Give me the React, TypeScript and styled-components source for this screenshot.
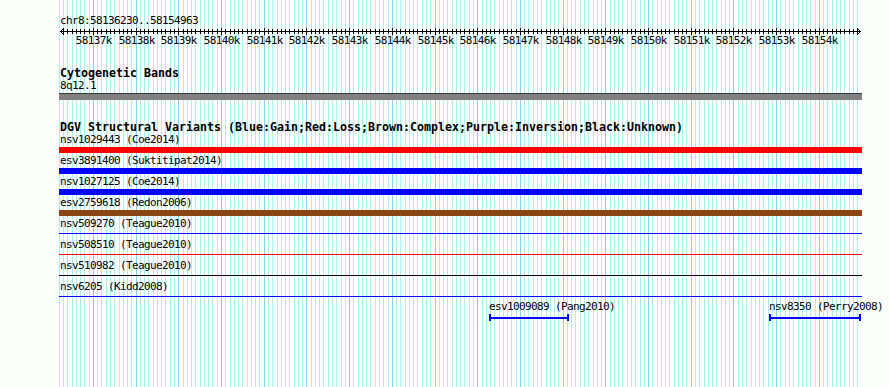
import React from "react";
import styled, { createGlobalStyle, css } from "styled-components";

const START = 58136230;
const END = 58154963;
const X0 = 60;
const SPAN_PX = 800;
const toX = (bp: number) => X0 + ((bp - START) * SPAN_PX) / (END - START);

const GlobalStyle = createGlobalStyle`
  html, body {
    margin: 0;
    padding: 0;
    background: #fcfffc;
  }
  body {
    font-family: "DejaVu Sans Mono", "Liberation Mono", monospace;
    color: #000;
  }
`;

/* GD "small" font look: 6px advance, 8px tall digits */
const smallFont = css`
  font-size: 11px;
  letter-spacing: -0.622px;
  line-height: 12px;
  height: 12px;
  white-space: nowrap;
`;

const Page = styled.div`
  position: relative;
  width: 890px;
  height: 387px;
  overflow: hidden;
  background: #fcfffc;
`;

const GridLayer = styled.svg`
  position: absolute;
  left: 0;
  top: 0;
  width: 890px;
  height: 387px;
  shape-rendering: crispEdges;
  pointer-events: none;
`;

const Content = styled.div`
  position: relative;
  display: flex;
  flex-direction: column;
  width: 890px;
`;

const RegionLabel = styled.div`
  ${smallFont};
  margin: 15px 0 0 60px;
`;

const RulerSvg = styled.svg`
  display: block;
  width: 890px;
  height: 20px;
  shape-rendering: crispEdges;
  font-family: "DejaVu Sans Mono", "Liberation Mono", monospace;
  font-size: 11px;
  letter-spacing: -0.622px;
`;

const TrackTitle = styled.div<{ $gap: number }>`
  margin: ${(p) => p.$gap}px 0 0 60px;
  font-size: 11.63px;
  font-weight: bold;
  line-height: 13px;
  height: 13px;
  white-space: nowrap;
`;

const BandLabel = styled.div`
  ${smallFont};
  margin-left: 60px;
`;

const BandBar = styled.div`
  margin: 1px 0 0 59px;
  width: 803px;
  height: 7px;
  box-sizing: border-box;
  background: #808080;
  border-top: 1px solid #3a3a3a;
`;

const FeatureRow = styled.div`
  display: flex;
  flex-direction: column;
  padding-bottom: 2px;
`;

const FeatureLabel = styled.div`
  ${smallFont};
  margin-left: 60px;
`;

const GlyphBox = styled.div`
  margin: 1px 0 0 59px;
  width: 803px;
  height: 6px;
`;

const Stroke = styled.div<{ $color: string; $thin: boolean }>`
  margin-top: ${(p) => (p.$thin ? 2 : 0)}px;
  height: ${(p) => (p.$thin ? 1 : 6)}px;
  background: ${(p) => p.$color};
`;

const PackedRow = styled.div`
  position: relative;
  margin-top: -1px;
  height: 21px;
`;

const PackedFeature = styled.div`
  position: absolute;
  top: 0;
  display: flex;
  flex-direction: column;
`;

const PackedLabel = styled.div`
  ${smallFont};
`;

const Segment = styled.div<{ $color: string }>`
  margin-top: 1px;
  height: 7px;
  box-sizing: border-box;
  border-left: 2px solid ${(p) => p.$color};
  border-right: 2px solid ${(p) => p.$color};
  display: flex;
  align-items: center;
`;

const SegmentLine = styled.div<{ $color: string }>`
  flex: 1;
  height: 2px;
  background: ${(p) => p.$color};
`;

const RED = "#ff0000";
const BLUE = "#0000ff";
const BROWN = "#8b4513";
const BLACK = "#000000";

const variants = [
  { label: "nsv1029443 (Coe2014)", color: RED, thin: false },
  { label: "esv3891400 (Suktitipat2014)", color: BLUE, thin: false },
  { label: "nsv1027125 (Coe2014)", color: BLUE, thin: false },
  { label: "esv2759618 (Redon2006)", color: BROWN, thin: false },
  { label: "nsv509270 (Teague2010)", color: BLUE, thin: true },
  { label: "nsv508510 (Teague2010)", color: RED, thin: true },
  { label: "nsv510982 (Teague2010)", color: BLACK, thin: true },
  { label: "nsv6205 (Kidd2008)", color: BLUE, thin: true },
];

const packed = [
  { label: "esv1009089 (Pang2010)", x: 489, w: 80, color: BLUE },
  { label: "nsv8350 (Perry2008)", x: 769, w: 92, color: BLUE },
];

const gridLines: { x: number; major: boolean }[] = [];
for (let bp = 58136200; bp <= 58154900; bp += 100) {
  gridLines.push({ x: Math.round(toX(bp)), major: bp % 1000 === 0 });
}

const ticks: { x: number; major: boolean; bp: number }[] = [];
for (let bp = 58136300; bp <= 58154900; bp += 100) {
  ticks.push({ x: Math.round(toX(bp)), major: bp % 1000 === 0, bp });
}

const RULER_Y = 4;

function Ruler() {
  return (
    <RulerSvg viewBox="0 0 890 20">
      <rect x={60} y={RULER_Y} width={801} height={1} fill="#000" />
      <path
        d={`M60.5 ${RULER_Y + 0.5} L64 ${RULER_Y - 3} M60.5 ${RULER_Y + 0.5} L64 ${RULER_Y + 4}`}
        stroke="#000"
        strokeWidth={1}
        fill="none"
        shapeRendering="auto"
      />
      <path
        d={`M860.5 ${RULER_Y + 0.5} L857 ${RULER_Y - 3} M860.5 ${RULER_Y + 0.5} L857 ${RULER_Y + 4}`}
        stroke="#000"
        strokeWidth={1}
        fill="none"
        shapeRendering="auto"
      />
      {ticks.map((t) => (
        <rect
          key={t.bp}
          x={t.x}
          y={t.major ? RULER_Y - 3 : RULER_Y - 2}
          width={1}
          height={t.major ? 7 : 5}
          fill="#000"
        />
      ))}
      {ticks
        .filter((t) => t.major)
        .map((t) => (
          <text key={`l${t.bp}`} x={t.x + 0.8} y={17} textAnchor="middle" fill="#000">
            {`${t.bp / 1000}k`}
          </text>
        ))}
    </RulerSvg>
  );
}

export default function App() {
  return (
    <>
      <GlobalStyle />
      <Page>
        <GridLayer viewBox="0 0 890 387">
          {gridLines.map((g) => (
            <rect
              key={g.x}
              x={g.x}
              y={0}
              width={1}
              height={387}
              fill={g.major ? "#87cefa" : "#afeeee"}
            />
          ))}
        </GridLayer>
        <Content>
          <RegionLabel>chr8:58136230..58154963</RegionLabel>
          <Ruler />
          <TrackTitle $gap={20}>Cytogenetic Bands</TrackTitle>
          <BandLabel>8q12.1</BandLabel>
          <BandBar />
          <TrackTitle $gap={21}>
            DGV Structural Variants (Blue:Gain;Red:Loss;Brown:Complex;Purple:Inversion;Black:Unknown)
          </TrackTitle>
          {variants.map((v) => (
            <FeatureRow key={v.label}>
              <FeatureLabel>{v.label}</FeatureLabel>
              <GlyphBox>
                <Stroke $color={v.color} $thin={v.thin} />
              </GlyphBox>
            </FeatureRow>
          ))}
          <PackedRow>
            {packed.map((f) => (
              <PackedFeature key={f.label} style={{ left: f.x, width: f.w }}>
                <PackedLabel>{f.label}</PackedLabel>
                <Segment $color={f.color}>
                  <SegmentLine $color={f.color} />
                </Segment>
              </PackedFeature>
            ))}
          </PackedRow>
        </Content>
      </Page>
    </>
  );
}
